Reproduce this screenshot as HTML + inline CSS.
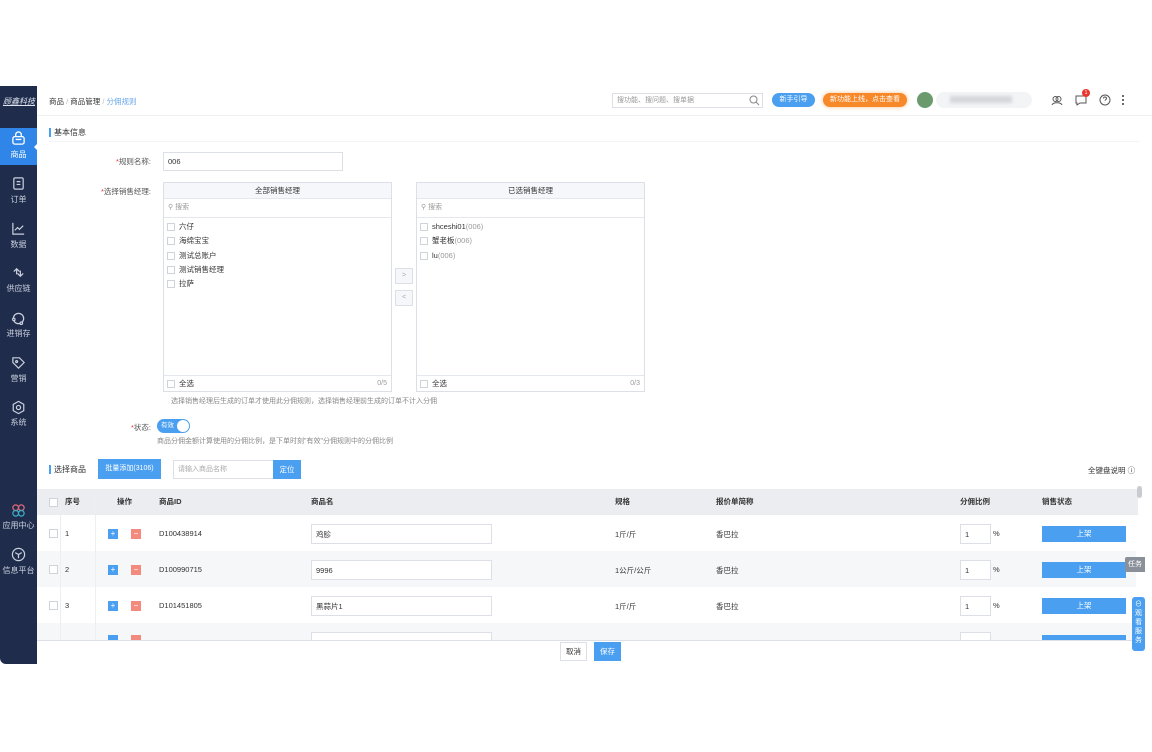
<!DOCTYPE html>
<html><head><meta charset="utf-8"><style>
*{margin:0;padding:0;box-sizing:border-box}
body{width:1152px;height:752px;background:#fff;font-family:"Liberation Sans","Noto Sans CJK SC",sans-serif;font-size:8px;color:#333;position:relative;overflow:hidden}
.a{position:absolute;white-space:nowrap}
.sb{position:absolute;left:0;top:86px;width:37px;height:578px;background:#1f2c4c;border-bottom-left-radius:6px}
.si{position:absolute;left:0;width:37px;text-align:center;color:#c9cfdc;font-size:8px}
.ic{position:absolute;left:11px;width:15px;height:15px}
.lbl{font-size:7.5px;color:#555}
.req{color:#e33}
.box{position:absolute;border:1px solid #dcdfe6;background:#fff}
.cb{display:inline-block;width:8px;height:8px;border:1px solid #cfd3da;background:#fff;vertical-align:middle;margin-right:4px}
.row{position:absolute;left:37px;width:1099px;height:36px}
.inp{position:absolute;border:1px solid #dcdfe6;background:#fff;font-size:7.5px;padding-left:4px;line-height:17px}
.btnb{position:absolute;background:#4a9ff0;color:#fff;text-align:center;font-size:7.5px}
</style></head><body>
<div class="sb"></div>
<div class="a" style="left:3px;top:96px;color:#dfe4ee;font-size:8px;font-style:italic;text-decoration:underline">顾鑫科技</div>
<div class="a" style="left:0;top:128px;width:37px;height:37px;background:#2f86e8"></div>
<div class="a" style="left:34px;top:143px;width:0;height:0;border-top:4px solid transparent;border-bottom:4px solid transparent;border-right:4px solid #fff"></div>
<svg class="ic" style="top:131px" viewBox="0 0 16 16" fill="none" stroke="#fff" stroke-width="1.4"><rect x="2" y="6" width="12" height="8" rx="2"/><path d="M5 6V4a3 3 0 016 0v2M5 9h6"/></svg>
<div class="si" style="top:149px;color:#fff">商品</div>
<svg class="ic" style="top:176px" viewBox="0 0 16 16" fill="none" stroke="#c9cfdc" stroke-width="1.3"><rect x="3" y="2" width="10" height="12" rx="1.5"/><path d="M6 6h4M6 9h4"/></svg>
<div class="si" style="top:194px">订单</div>
<svg class="ic" style="top:221px" viewBox="0 0 16 16" fill="none" stroke="#c9cfdc" stroke-width="1.3"><path d="M2 2v12h12M4 10l3-3 2 2 4-4"/></svg>
<div class="si" style="top:239px">数据</div>
<svg class="ic" style="top:265px" viewBox="0 0 16 16" fill="none" stroke="#c9cfdc" stroke-width="1.3"><path d="M3 7l3-3 3 3M6 4v6M13 9l-3 3-3-3M10 12V6"/></svg>
<div class="si" style="top:283px">供应链</div>
<svg class="ic" style="top:311px" viewBox="0 0 16 16" fill="none" stroke="#c9cfdc" stroke-width="1.3"><circle cx="8" cy="8" r="5.5"/><circle cx="3" cy="9" r="1.3" fill="#1f2c4c"/><circle cx="11" cy="13" r="1.3" fill="#1f2c4c"/></svg>
<div class="si" style="top:328px">进销存</div>
<svg class="ic" style="top:355px" viewBox="0 0 16 16" fill="none" stroke="#c9cfdc" stroke-width="1.3"><path d="M2 3h7l5 5-6 6-6-6z"/><circle cx="6" cy="7" r="1"/></svg>
<div class="si" style="top:373px">营销</div>
<svg class="ic" style="top:400px" viewBox="0 0 16 16" fill="none" stroke="#c9cfdc" stroke-width="1.3"><path d="M8 1.5l5.6 3.2v6.6L8 14.5l-5.6-3.2V4.7z"/><circle cx="8" cy="8" r="2.2"/></svg>
<div class="si" style="top:417px">系统</div>
<svg class="ic" style="top:503px" viewBox="0 0 16 16" fill="none" stroke-width="1.3"><circle cx="5" cy="5" r="3" stroke="#e06a7a"/><circle cx="11" cy="5" r="3" stroke="#e06a7a"/><circle cx="5" cy="11" r="3" stroke="#3ab0c8"/><circle cx="11" cy="11" r="3" stroke="#3ab0c8"/></svg>
<div class="si" style="top:520px;left:-2px;width:41px">应用中心</div>
<svg class="ic" style="top:547px" viewBox="0 0 16 16" fill="none" stroke="#c9cfdc" stroke-width="1.3"><circle cx="8" cy="8" r="6.5"/><path d="M4.5 6L8 8l3.5-2M8 8v4"/></svg>
<div class="si" style="top:565px;left:-2px;width:41px">信息平台</div>

<!-- header -->
<div class="a" style="left:49px;top:96px;font-size:7.5px;color:#333">商品 <span style="color:#bbb">/</span> 商品管理 <span style="color:#bbb">/</span> <span style="color:#6aa8e8">分佣规则</span></div>
<div class="a" style="left:37px;top:115px;width:1115px;height:1px;background:#eef0f3"></div>
<div class="inp" style="left:612px;top:93px;width:151px;height:15px;line-height:13px;color:#999;font-size:7px">搜功能、搜问题、搜单据</div>
<svg class="a" style="left:749px;top:95px" width="11" height="11" viewBox="0 0 11 11" fill="none" stroke="#888"><circle cx="4.5" cy="4.5" r="3.5"/><path d="M7 7l3 3"/></svg>
<div class="a" style="left:772px;top:93px;width:43px;height:14px;border-radius:7px;background:#4a9ff0;color:#fff;font-size:7px;text-align:center;line-height:14px">新手引导</div>
<div class="a" style="left:823px;top:93px;width:84px;height:14px;border-radius:7px;background:#f7892a;color:#fff;font-size:7px;text-align:center;line-height:14px;box-shadow:0 0 4px #f9c08a">新功能上线，点击查看</div>
<div class="a" style="left:917px;top:92px;width:16px;height:16px;border-radius:8px;background:#6b9a6e"></div>
<div class="a" style="left:936px;top:92px;width:96px;height:16px;border-radius:8px;background:#f3f4f6"></div>
<div class="a" style="left:950px;top:96px;width:62px;height:7px;background:#d4d6da;filter:blur(1.5px)"></div>
<svg class="a" style="left:1051px;top:94px" width="12" height="12" viewBox="0 0 12 12" fill="none" stroke="#555"><circle cx="4.5" cy="5" r="2.5"/><circle cx="7.5" cy="5" r="2.5"/><path d="M1 11c1-3 9-3 10 0"/></svg>
<svg class="a" style="left:1075px;top:94px" width="12" height="12" viewBox="0 0 12 12" fill="none" stroke="#555"><path d="M1 2h10v7H5l-3 2V9H1z"/><path d="M4 6h.1M6 6h.1M8 6h.1"/></svg>
<div class="a" style="left:1082px;top:89px;width:8px;height:8px;border-radius:4px;background:#e8372f;color:#fff;font-size:5px;text-align:center;line-height:8px">1</div>
<svg class="a" style="left:1099px;top:94px" width="12" height="12" viewBox="0 0 12 12" fill="none" stroke="#555"><circle cx="6" cy="6" r="5"/><path d="M4.5 4.5a1.5 1.5 0 113 0c0 1-1.5 1-1.5 2.3M6 8.5v.3"/></svg>
<div class="a" style="left:1122px;top:94px;width:2px;height:11px;background:radial-gradient(circle,#555 45%,transparent 50%) 0 0/2px 4px"></div>

<!-- basic info -->
<div class="a" style="left:49px;top:128px;width:2px;height:9px;background:#4a9ff0"></div>
<div class="a" style="left:54px;top:127px;font-size:8px">基本信息</div>
<div class="a" style="left:49px;top:141px;width:1090px;height:1px;background:#f2f3f5"></div>
<div class="a lbl" style="left:116px;top:156px"><span class="req">*</span>规则名称:</div>
<div class="inp" style="left:163px;top:152px;width:180px;height:19px">006</div>
<div class="a lbl" style="left:101px;top:186px"><span class="req">*</span>选择销售经理:</div>

<div class="box" style="left:163px;top:182px;width:229px;height:210px">
<div style="height:16px;background:#f5f7fa;border-bottom:1px solid #e4e7ed;text-align:center;line-height:15px;font-size:7.5px">全部销售经理</div>
<div style="height:19px;border-bottom:1px solid #e4e7ed;line-height:18px;padding-left:4px;color:#999;font-size:7px">&#9906; 搜索</div>
<div style="padding:2px 0 0 3px;line-height:14.3px;font-size:7.5px">
<div><span class="cb"></span>六仔</div><div><span class="cb"></span>海绵宝宝</div><div><span class="cb"></span>测试总账户</div><div><span class="cb"></span>测试销售经理</div><div><span class="cb"></span>拉萨</div></div>
<div style="position:absolute;left:0;right:0;bottom:0;height:16px;border-top:1px solid #e4e7ed;line-height:15px;padding-left:3px;font-size:7.5px"><span class="cb"></span>全选<span style="position:absolute;right:4px;color:#999;font-size:7px">0/5</span></div>
</div>
<div class="box" style="left:395px;top:268px;width:18px;height:16px;background:#f5f7fa;text-align:center;line-height:14px;color:#aaa;font-size:7px">&gt;</div>
<div class="box" style="left:395px;top:290px;width:18px;height:16px;background:#f5f7fa;text-align:center;line-height:14px;color:#aaa;font-size:7px">&lt;</div>
<div class="box" style="left:416px;top:182px;width:229px;height:210px">
<div style="height:16px;background:#f5f7fa;border-bottom:1px solid #e4e7ed;text-align:center;line-height:15px;font-size:7.5px">已选销售经理</div>
<div style="height:19px;border-bottom:1px solid #e4e7ed;line-height:18px;padding-left:4px;color:#999;font-size:7px">&#9906; 搜索</div>
<div style="padding:2px 0 0 3px;line-height:14.3px;font-size:7.5px">
<div><span class="cb"></span>shceshi01<span style="color:#999">(006)</span></div><div><span class="cb"></span>蟹老板<span style="color:#999">(006)</span></div><div><span class="cb"></span>lu<span style="color:#999">(006)</span></div></div>
<div style="position:absolute;left:0;right:0;bottom:0;height:16px;border-top:1px solid #e4e7ed;line-height:15px;padding-left:3px;font-size:7.5px"><span class="cb"></span>全选<span style="position:absolute;right:4px;color:#999;font-size:7px">0/3</span></div>
</div>
<div class="a" style="left:171px;top:396px;font-size:7px;color:#888">选择销售经理后生成的订单才使用此分佣规则，选择销售经理前生成的订单不计入分佣</div>
<div class="a lbl" style="left:131px;top:422px"><span class="req">*</span>状态:</div>
<div class="a" style="left:157px;top:419px;width:33px;height:14px;border-radius:7px;background:#4a9ff0;color:#fff;font-size:6.5px;line-height:14px;padding-left:4px">有效</div>
<div class="a" style="left:177px;top:420px;width:12px;height:12px;border-radius:6px;background:#fff"></div>
<div class="a" style="left:157px;top:436px;font-size:7px;color:#888">商品分佣金额计算使用的分佣比例，是下单时刻"有效"分佣规则中的分佣比例</div>

<!-- select goods -->
<div class="a" style="left:49px;top:465px;width:2px;height:9px;background:#4a9ff0"></div>
<div class="a" style="left:54px;top:464px;font-size:8px">选择商品</div>
<div class="btnb" style="left:98px;top:459px;width:63px;height:20px;line-height:20px;font-size:7px">批量添加(3106)</div>
<div class="inp" style="left:173px;top:460px;width:101px;height:19px;color:#aaa;font-size:7px">请输入商品名称</div>
<div class="btnb" style="left:273px;top:460px;width:28px;height:19px;line-height:19px">定位</div>
<div class="a" style="left:1088px;top:465px;font-size:7.5px">全键盘说明 &#9432;</div>

<div class="a" style="left:37px;top:489px;width:1101px;height:26px;background:#ebedf1"></div>
<div class="row" style="top:551px;background:#f6f7f9"></div>
<div class="row" style="top:623px;height:17px;background:#f6f7f9"></div>
<div class="a" style="left:60px;top:489px;width:1px;height:151px;background:#eceef2"></div>
<div class="a" style="left:95px;top:489px;width:1px;height:151px;background:#eceef2"></div>
<div class="a" style="left:37px;top:640px;width:1101px;height:1px;background:#dcdfe6"></div>
<div class="a" style="left:1137px;top:486px;width:5px;height:12px;border-radius:3px;background:#c8cbd0"></div>

<div class="a" style="top:497px;left:49px;font-size:7.5px;font-weight:bold"><span class="cb" style="width:9px;height:9px"></span></div>
<div class="a" style="top:496px;left:65px;font-weight:bold;font-size:7.5px">序号</div>
<div class="a" style="top:496px;left:117px;font-weight:bold;font-size:7.5px">操作</div>
<div class="a" style="top:496px;left:159px;font-weight:bold;font-size:7.5px">商品ID</div>
<div class="a" style="top:496px;left:311px;font-weight:bold;font-size:7.5px">商品名</div>
<div class="a" style="top:496px;left:615px;font-weight:bold;font-size:7.5px">规格</div>
<div class="a" style="top:496px;left:716px;font-weight:bold;font-size:7.5px">报价单简称</div>
<div class="a" style="top:496px;left:960px;font-weight:bold;font-size:7.5px">分佣比例</div>
<div class="a" style="top:496px;left:1042px;font-weight:bold;font-size:7.5px">销售状态</div>

<!-- rows -->
<div id="rows"></div>
<div class="a" style="top:529px;left:49px"><span class="cb" style="width:9px;height:9px"></span></div>
<div class="a" style="top:529px;left:65px;font-size:7.5px">1</div>
<div class="a" style="top:529px;left:108px;width:10px;height:10px;background:#4a9ff0;color:#fff;font-size:8px;line-height:10px;text-align:center">+</div>
<div class="a" style="top:529px;left:131px;width:10px;height:10px;background:#f28b7e;color:#fff;font-size:8px;line-height:9px;text-align:center">−</div>
<div class="a" style="top:529px;left:159px;font-size:7.5px">D100438914</div>
<div class="inp" style="top:524px;left:311px;width:181px;height:20px;line-height:19px">鸡胗</div>
<div class="a" style="top:529px;left:615px;font-size:7.5px">1斤/斤</div>
<div class="a" style="top:529px;left:716px;font-size:7.5px">香巴拉</div>
<div class="inp" style="top:524px;left:960px;width:31px;height:20px;line-height:19px">1</div>
<div class="a" style="top:529px;left:993px;font-size:7.5px">%</div>
<div class="btnb" style="top:526px;left:1042px;width:84px;height:16px;line-height:16px">上架</div>

<div class="a" style="top:565px;left:49px"><span class="cb" style="width:9px;height:9px"></span></div>
<div class="a" style="top:565px;left:65px;font-size:7.5px">2</div>
<div class="a" style="top:565px;left:108px;width:10px;height:10px;background:#4a9ff0;color:#fff;font-size:8px;line-height:10px;text-align:center">+</div>
<div class="a" style="top:565px;left:131px;width:10px;height:10px;background:#f28b7e;color:#fff;font-size:8px;line-height:9px;text-align:center">−</div>
<div class="a" style="top:565px;left:159px;font-size:7.5px">D100990715</div>
<div class="inp" style="top:560px;left:311px;width:181px;height:20px;line-height:19px">9996</div>
<div class="a" style="top:565px;left:615px;font-size:7.5px">1公斤/公斤</div>
<div class="a" style="top:565px;left:716px;font-size:7.5px">香巴拉</div>
<div class="inp" style="top:560px;left:960px;width:31px;height:20px;line-height:19px">1</div>
<div class="a" style="top:565px;left:993px;font-size:7.5px">%</div>
<div class="btnb" style="top:562px;left:1042px;width:84px;height:16px;line-height:16px">上架</div>

<div class="a" style="top:601px;left:49px"><span class="cb" style="width:9px;height:9px"></span></div>
<div class="a" style="top:601px;left:65px;font-size:7.5px">3</div>
<div class="a" style="top:601px;left:108px;width:10px;height:10px;background:#4a9ff0;color:#fff;font-size:8px;line-height:10px;text-align:center">+</div>
<div class="a" style="top:601px;left:131px;width:10px;height:10px;background:#f28b7e;color:#fff;font-size:8px;line-height:9px;text-align:center">−</div>
<div class="a" style="top:601px;left:159px;font-size:7.5px">D101451805</div>
<div class="inp" style="top:596px;left:311px;width:181px;height:20px;line-height:19px">黑蒜片1</div>
<div class="a" style="top:601px;left:615px;font-size:7.5px">1斤/斤</div>
<div class="a" style="top:601px;left:716px;font-size:7.5px">香巴拉</div>
<div class="inp" style="top:596px;left:960px;width:31px;height:20px;line-height:19px">1</div>
<div class="a" style="top:601px;left:993px;font-size:7.5px">%</div>
<div class="btnb" style="top:598px;left:1042px;width:84px;height:16px;line-height:16px">上架</div>

<div class="a" style="top:635px;left:108px;width:10px;height:5px;background:#4a9ff0"></div>
<div class="a" style="top:635px;left:131px;width:10px;height:5px;background:#f28b7e"></div>
<div class="a" style="top:632px;left:311px;width:181px;height:8px;border:1px solid #dcdfe6;border-bottom:none;background:#fff"></div>
<div class="a" style="top:632px;left:960px;width:31px;height:8px;border:1px solid #dcdfe6;border-bottom:none;background:#fff"></div>
<div class="a" style="top:635px;left:1042px;width:84px;height:5px;background:#4a9ff0"></div>

<div class="a" style="left:560px;top:642px;width:27px;height:19px;border:1px solid #dcdfe6;text-align:center;line-height:17px;font-size:7.5px">取消</div>
<div class="btnb" style="left:594px;top:642px;width:27px;height:19px;line-height:19px">保存</div>

<div class="a" style="left:1125px;top:557px;width:20px;height:15px;background:#8a9099;color:#fff;font-size:7px;text-align:center;line-height:15px;border-radius:2px 0 0 2px">任务</div>
<div class="a" style="left:1132px;top:597px;width:13px;height:54px;background:#4a9ff0;color:#fff;font-size:7px;text-align:center;line-height:9px;white-space:normal;border-radius:3px;padding-top:3px">⊖<br>观<br>看<br>服<br>务</div>
</body></html>
